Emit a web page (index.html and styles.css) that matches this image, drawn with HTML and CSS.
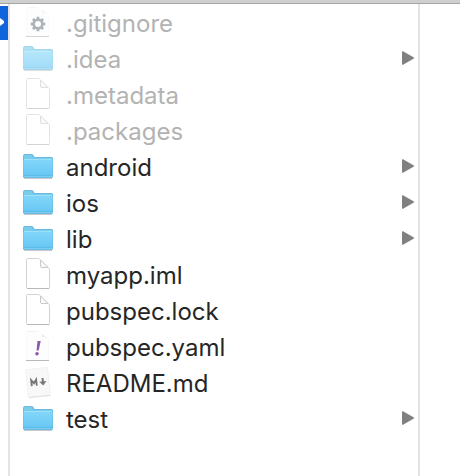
FILE: index.html
```html
<!DOCTYPE html>
<html lang="en">
<head>
<meta charset="utf-8">
<title>myapp</title>
<link rel="stylesheet" href="styles.css">
</head>
<body>
<svg class="sprite" aria-hidden="true">
  <defs>
    <linearGradient id="folder-fill" x1="0" y1="0" x2="0" y2="1">
      <stop offset="0" stop-color="#82d6fa"/>
      <stop offset="1" stop-color="#69c8f4"/>
    </linearGradient>
    <linearGradient id="curl" x1="0" y1="1" x2="1" y2="0">
      <stop offset="0" stop-color="#d4d4d4"/>
      <stop offset="0.6" stop-color="#f0f0f0"/>
      <stop offset="1" stop-color="#f8f8f8"/>
    </linearGradient>
    <symbol id="folder" viewBox="0 0 30 36">
      <path d="M1 28.500h28" stroke="#c9c9c9" stroke-width="1"/>
      <path d="M0 6q0-2 2-2h6.500q1 0 1.800 1l1.200 2H28.500q1.500 0 1.500 1.500V26.500q0 1.500-1.500 1.500h-27Q0 28 0 26.500z" fill="#68bbe2"/>
      <path d="M1 6q0-1 1-1h6.500l2 3H29v1H1z" fill="#7accec"/>
      <path d="M.5 9.500h29V25H.5z" fill="url(#folder-fill)"/>
      <path d="M1 9.500h28" stroke="#9ce0fb" stroke-width="1"/>
      <path d="M1 25.500h28" stroke="#5fbbe6" stroke-width="1"/>
      <path d="M1 26.500h28" stroke="#7bcdf5" stroke-width="1"/>
    </symbol>
    <symbol id="file" viewBox="0 0 30 36">
      <path d="M4.500.500h11.500L26.500 11v18.500q0 1-1 1h-21q-1 0-1-1v-28q0-1 1-1z" fill="#fff" stroke="#d2d2d2"/>
      <path d="M17.500 2v6q0 1.500 1.500 1.500h6z" fill="#fafafa" stroke="#cacaca"/>
      <path d="M4 30.500h22" stroke="#b8b8b8"/>
    </symbol>
    <symbol id="page" viewBox="0 0 30 36">
      <path d="M3 1.500h11q3 0 4 5l8 5v19H3z" fill="#fdfdfd"/>
      <path d="M4 1.500h10" fill="none" stroke="#f1f1f1"/>
      <path d="M15 1q5 1 4 6 6-.5 7 5v-2Q20 3 15 1z" fill="url(#curl)"/>
      <path d="M3.500 2v28M25.500 12v18" stroke="#f8f8f8"/>
      <path d="M3 30.500h23" stroke="#b9b9b9"/>
    </symbol>
    <symbol id="gear" viewBox="0 0 30 36">
      <use href="#page"/>
      <circle cx="15" cy="18" r="4.300" fill="none" stroke="#75828a" stroke-width="2.600"/>
      <path d="M15 10.800v2.400M15 22.800v2.400M7.800 18h2.400M19.800 18h2.400M9.900 12.900l1.700 1.700M18.400 21.400l1.700 1.700M20.100 12.900l-1.700 1.700M11.600 21.400l-1.700 1.700" stroke="#75828a" stroke-width="2.800"/>
    </symbol>
    <symbol id="yaml" viewBox="0 0 30 36">
      <use href="#page"/>
      <path d="M14.500 11h3.200l-2 9.500h-2.200z" fill="#8a5bb0"/>
      <circle cx="14" cy="23.700" r="1.800" fill="#8a5bb0"/>
    </symbol>
    <symbol id="markdown" viewBox="0 0 30 36">
      <g transform="rotate(-6 15 17)">
        <rect x="4" y="2.500" width="22" height="28" rx="1" fill="#f8f8f8" stroke="#f1f1f1"/>
        <path d="M5 30.500h21" stroke="#dedede"/>
        <path d="M8.500 19.500v-6l2.500 3.200 2.500-3.200v6" fill="none" stroke="#777" stroke-width="1.900"/>
        <path d="M20 12.500v6" fill="none" stroke="#777" stroke-width="2"/>
        <path d="M16.400 15.800h7.200l-3.600 4.200z" fill="#777"/>
      </g>
    </symbol>
    <symbol id="chevron" viewBox="0 0 12 14">
      <path d="M0 .500q0-.5 1-.3L11.500 6.300q1 .7 0 1.400L1 13.800q-1 .2-1-.3z" fill="#808080"/>
    </symbol>
  </defs>
</svg>
<div class="toolbar-edge"></div>
<main class="browser">
  <div class="parent-column">
    <div class="selected"><svg class="pointer" viewBox="0 0 4 8" aria-hidden="true"><path d="M0 0l4 3v2L0 8z" fill="#fff"/></svg></div>
  </div>
  <ul class="files">
    <li class="row hidden"><svg class="icon"><use href="#gear"/></svg><span class="name">.gitignore</span></li>
    <li class="row hidden"><svg class="icon"><use href="#folder"/></svg><span class="name">.idea</span><svg class="arrow"><use href="#chevron"/></svg></li>
    <li class="row hidden"><svg class="icon"><use href="#file"/></svg><span class="name">.metadata</span></li>
    <li class="row hidden"><svg class="icon"><use href="#file"/></svg><span class="name">.packages</span></li>
    <li class="row"><svg class="icon"><use href="#folder"/></svg><span class="name">android</span><svg class="arrow"><use href="#chevron"/></svg></li>
    <li class="row"><svg class="icon"><use href="#folder"/></svg><span class="name">ios</span><svg class="arrow"><use href="#chevron"/></svg></li>
    <li class="row"><svg class="icon"><use href="#folder"/></svg><span class="name">lib</span><svg class="arrow"><use href="#chevron"/></svg></li>
    <li class="row"><svg class="icon"><use href="#file"/></svg><span class="name">myapp.iml</span></li>
    <li class="row"><svg class="icon"><use href="#file"/></svg><span class="name">pubspec.lock</span></li>
    <li class="row"><svg class="icon"><use href="#yaml"/></svg><span class="name">pubspec.yaml</span></li>
    <li class="row"><svg class="icon"><use href="#markdown"/></svg><span class="name">README.md</span></li>
    <li class="row"><svg class="icon"><use href="#folder"/></svg><span class="name">test</span><svg class="arrow"><use href="#chevron"/></svg></li>
  </ul>
  <div class="next-column"></div>
</main>
</body>
</html>
```
FILE: styles.css
```css
* {
  box-sizing: border-box;
}

body {
  display: flex;
  flex-direction: column;
  min-height: 100vh;
  margin: 0;
  background: #fff;
  color: #262626;
  font-family: Inter, "Liberation Sans", sans-serif;
  font-size: 24px;
  line-height: 36px;
}

.sprite {
  position: absolute;
  width: 0;
  height: 0;
}

.toolbar-edge {
  height: 4px;
  background: #cfcfcf;
  border-bottom: 1px solid #a6a6a6;
}

.browser {
  display: flex;
  flex: 1;
}

.parent-column {
  width: 8px;
  padding-top: 2px;
}

.selected {
  display: flex;
  align-items: center;
  height: 34px;
  background: #1065dc;
}

.pointer {
  width: 4px;
  height: 8px;
  margin-bottom: 2px;
}

.files {
  flex: 1;
  margin: 0;
  padding: 2px 4px 0 13px;
  border: solid #e3e3e3;
  border-width: 0 2px;
  list-style: none;
}

.row {
  display: flex;
  align-items: center;
  height: 36px;
}

.icon {
  width: 30px;
  height: 36px;
  margin-right: 13px;
}

.name {
  flex: 1;
}

.arrow {
  width: 12px;
  height: 14px;
  margin-bottom: 4px;
}

.hidden .icon {
  opacity: 0.6;
}

.hidden .name {
  color: #b3b3b3;
}

.next-column {
  width: 40px;
}
```
